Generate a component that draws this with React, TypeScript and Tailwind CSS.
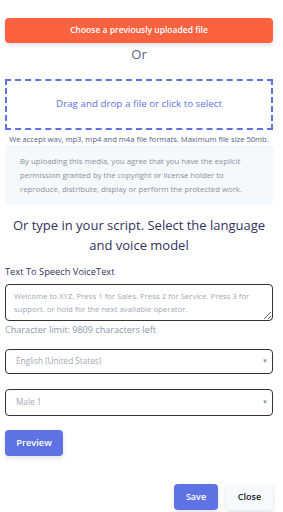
import React from 'react';

const App: React.FC = () => {
  return (
    <div className="w-[283px] h-[512px] bg-white pl-[5px] pr-[10px] pt-[15px] font-['Open_Sans',sans-serif] overflow-hidden">
      <button className="w-full h-[25px] rounded-[4px] bg-[#fb6340] text-white text-[8.5px] font-semibold shadow-[0_2px_4px_rgba(50,50,93,0.15)]">
        Choose a previously uploaded file
      </button>
      <div className="mt-[2px] text-center text-[13px] leading-[18px] text-[#525f7f]">Or</div>

      <div className="mt-[16px] h-[51px] border-2 border-dashed border-[#5e72e4] flex items-center justify-center">
        <span className="text-[9.8px] text-[#5e72e4]">Drag and drop a file or click to select</span>
      </div>
      <p className="mt-[4px] text-center text-[7.6px] leading-[10px] text-[#525f7f] whitespace-nowrap">
        We accept wav, mp3, mp4 and m4a file formats. Maximum file size 50mb.
      </p>

      <div className="mt-[1px] rounded-[4px] bg-[#f6f9fc] px-[15px] py-[9px] text-[7.8px] leading-[14px] text-[#8a8f99]">
        By uploading this media, you agree that you have the explicit permission granted by the copyright or license holder to reproduce, distribute, display or perform the protected work.
      </div>

      <h2 className="mt-[10px] text-center text-[13px] leading-[20px] text-[#32325d]">
        Or type in your script. Select the language and voice model
      </h2>

      <label className="block mt-[11px] text-[9.3px] leading-[12px] text-[#32325d]">Text To Speech VoiceText</label>
      <textarea
        className="mt-[6px] block w-full h-[37px] resize-y rounded-[4px] border border-[#333] px-[8px] py-[5px] text-[7.8px] leading-[13px] text-[#525f7f] placeholder:text-[#a0a8b5] outline-none"
        placeholder="Welcome to XYZ. Press 1 for Sales. Press 2 for Service. Press 3 for support. or hold for the next available operator."
      />
      <p className="mt-[3px] text-[9.1px] leading-[12px] text-[#8898aa]">Character limit: 9809 characters left</p>

      <div className="mt-[13px] h-[25px] rounded-[4px] border border-[#333] flex items-center justify-between pl-[10px] pr-[4px]">
        <span className="text-[8.2px] text-[#a0a8b5]">English (United States)</span>
        <span className="text-[6px] text-[#8898aa]">▼</span>
      </div>
      <div className="mt-[15px] h-[27px] rounded-[4px] border border-[#333] flex items-center justify-between pl-[10px] pr-[4px]">
        <span className="text-[8.2px] text-[#a0a8b5]">Male 1</span>
        <span className="text-[6px] text-[#8898aa]">▼</span>
      </div>

      <button className="mt-[14px] w-[58px] h-[26px] rounded-[4px] bg-[#5e72e4] text-white text-[9.3px] font-semibold shadow-[0_2px_4px_rgba(50,50,93,0.15)]">
        Preview
      </button>

      <div className="mt-[28px] flex justify-end gap-[8px]">
        <button className="w-[44px] h-[26px] rounded-[4px] bg-[#5e72e4] text-white text-[9px] font-semibold shadow-[0_2px_4px_rgba(50,50,93,0.15)]">
          Save
        </button>
        <button className="w-[47px] h-[26px] rounded-[4px] bg-[#f7f9fc] text-[#212529] text-[9px] font-semibold shadow-[0_2px_4px_rgba(50,50,93,0.15)]">
          Close
        </button>
      </div>
    </div>
  );
};

export default App;
